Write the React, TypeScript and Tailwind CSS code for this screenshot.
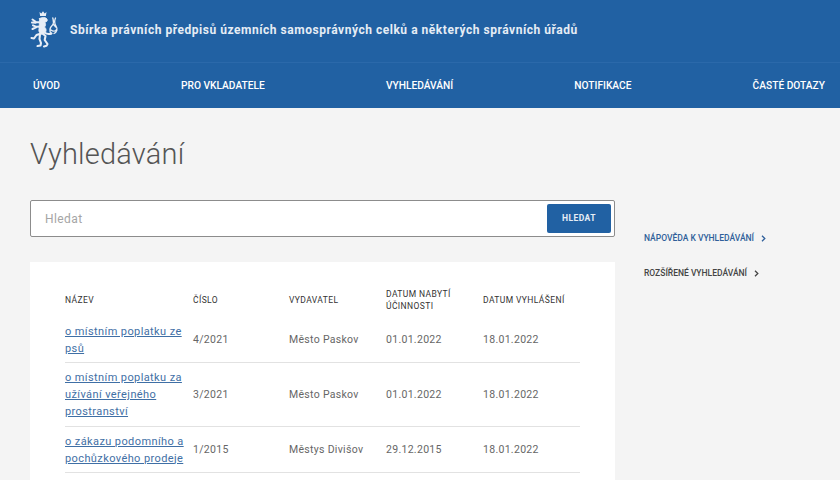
const rows = [
  { name: "o místním poplatku ze psů", num: "4/2021", pub: "Město Paskov", eff: "01.01.2022", ann: "18.01.2022", h: "h-[46px]" },
  { name: "o místním poplatku za užívání veřejného prostranství", num: "3/2021", pub: "Město Paskov", eff: "01.01.2022", ann: "18.01.2022", h: "h-[64px]" },
  { name: "o zákazu podomního a pochůzkového prodeje", num: "1/2015", pub: "Městys Divišov", eff: "29.12.2015", ann: "18.01.2022", h: "h-[46px]" },
];

function Lion() {
  return (
    <svg width="30" height="37" viewBox="0 0 30 37" className="shrink-0" fill="none" stroke="#e8eef6" strokeLinecap="round" strokeLinejoin="round">
      <path d="M9.500 1l1.800 1.600L13 .3l1.700 2.300L16.500 1l-.6 4h-5.800z" fill="#e8eef6" strokeWidth="0" />
      <path d="M9.500 7.500c2.500-1.500 6.500-1.500 7.500.5 1 1.800-.5 3.200-2.200 3 1.200 2 1 3.800-.3 5 1.800 1.500 2.200 3.700.8 5.500l-3.500 1.800c-2.500-1-3.500-3.300-2.800-5.500.2-2 .5-6.500.5-10.300z" fill="#e8eef6" strokeWidth="0.800" />
      <path d="M11 11.500 6 11 2.500 8.500M2 11.500l3.500.3M11 15.500l-4.500.3-3.500-1.500M2.500 18l4-1.800" strokeWidth="2" />
      <path d="M11 22.500 6.500 24 4 27.500l-2.500-.5M12.500 22.500l3 2.500-.8 4 2.800 4-1 1.800-2.500.7M10 23.500l-.5 4.500 1.500 4-.5 2.500-3 .5M14.500 21.500c2 1.500 4.500 2 7 1" strokeWidth="2.100" />
      <path d="M21.500 22.500c-3-2.500-1.500-6 1-8.500 1.800-2 1-4 .3-7M24 22.500c3-1.500 4-4.500 2-7.500-1.500-2.300-1.800-5-.5-8M21 19c2 1.800 4.500 1.500 5.500-.5M23 13c1.200 1 2 2 2.500 3" strokeWidth="1.300" />
    </svg>
  );
}

export default function App() {
  return (
    <div className="h-[480px] w-[840px] overflow-hidden bg-[#f4f4f4] font-['Roboto',sans-serif]">
      <header className="bg-[#2161a3]">
        <div className="flex h-[63px] items-center gap-[10px] border-b border-[#2b69aa] pb-[3px] pl-[30px]">
          <Lion />
          <span className="text-[12px] font-bold tracking-[0.53px] text-[#e6edf5]">
            Sbírka právních předpisů územních samosprávných celků a některých správních úřadů
          </span>
        </div>
        <nav className="flex h-[45px] items-center justify-between pr-[15px] pl-[33px] text-[10.2px] font-medium text-white">
          <a>ÚVOD</a>
          <a>PRO VKLADATELE</a>
          <a>VYHLEDÁVÁNÍ</a>
          <a>NOTIFIKACE</a>
          <a>ČASTÉ DOTAZY</a>
        </nav>
      </header>
      <main className="flex pl-[30px]">
        <div className="w-[585px] shrink-0">
          <h1 className="mt-[26px] text-[29px] leading-[40px] font-light tracking-[0.2px] text-[#555]">Vyhledávání</h1>
          <div className="mt-[26px] flex h-[37px] items-center justify-between rounded-[2px] border border-[#8c8c8c] bg-white pr-[3px] pl-[14px]">
            <span className="text-[12px] tracking-[0.4px] text-[#a5a5a5]">Hledat</span>
            <button className="h-[29px] w-[64px] rounded-[2px] bg-[#2161a3] text-[8.500px] font-bold tracking-[0.45px] text-[#e6edf5]">HLEDAT</button>
          </div>
          <section className="mt-[25px] h-[300px] bg-white px-[35px] pt-[22px]">
            <div className="grid h-[33px] grid-cols-[128px_96px_97px_97px_97px] items-start pt-[4px] text-[8.500px] leading-[12px] font-normal tracking-[0.4px] text-[#333]">
              <div className="pt-[6px]">NÁZEV</div>
              <div className="pt-[6px]">ČÍSLO</div>
              <div className="pt-[6px]">VYDAVATEL</div>
              <div>DATUM NABYTÍ<br />ÚČINNOSTI</div>
              <div className="pt-[6px]">DATUM VYHLÁŠENÍ</div>
            </div>
            {rows.map((r) => (
              <div key={r.num} className={`grid grid-cols-[128px_96px_97px_97px_97px] items-center border-b border-[#e2e2e2] text-[10.500px] tracking-[0.3px] text-[#666] ${r.h}`}>
                <a className="pr-[4px] text-[11px] leading-[17px] tracking-[0.4px] text-[#3f6fa5] underline">{r.name}</a>
                <div className="pt-[1px]">{r.num}</div>
                <div className="pt-[1px]">{r.pub}</div>
                <div className="pt-[1px]">{r.eff}</div>
                <div className="pt-[1px]">{r.ann}</div>
              </div>
            ))}
          </section>
        </div>
        <aside className="ml-[29px] flex flex-col gap-[23px] pt-[124px] text-[8.500px] font-medium">
          <a className="flex items-center gap-[7px] leading-[12px] text-[#2f5f9a]">NÁPOVĚDA K VYHLEDÁVÁNÍ <Chevron /></a>
          <a className="flex items-center gap-[7px] leading-[12px] text-[#444]">ROZŠÍŘENÉ VYHLEDÁVÁNÍ <Chevron /></a>
        </aside>
      </main>
    </div>
  );
}

function Chevron() {
  return (
    <svg width="5" height="7" viewBox="0 0 5 7" fill="none" stroke="currentColor" strokeWidth="1.300">
      <path d="M1 .8 3.800 3.500 1 6.200" />
    </svg>
  );
}
